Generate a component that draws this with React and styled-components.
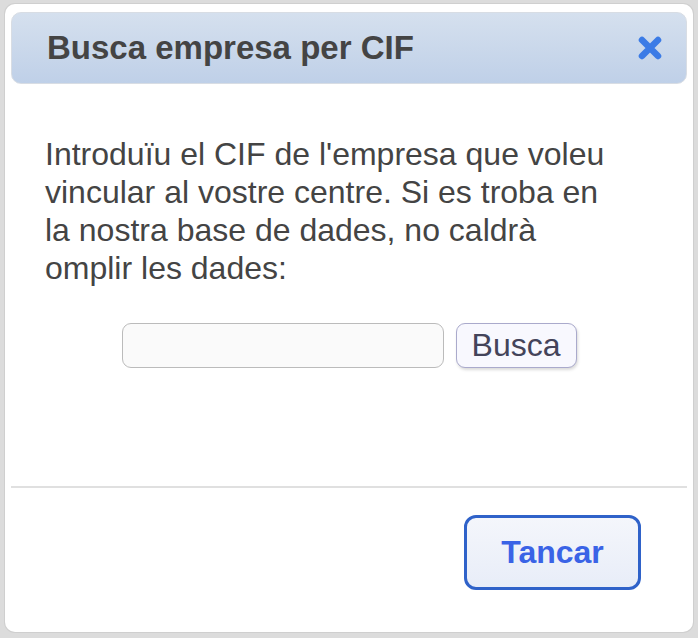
import React, { useState } from "react";
import styled, { createGlobalStyle } from "styled-components";

const GlobalStyle = createGlobalStyle`
  html, body {
    margin: 0;
    padding: 0;
    background: #d8d8d8;
  }
  body {
    font-family: "Liberation Sans", Arial, sans-serif;
  }
`;

const Backdrop = styled.div`
  width: 698px;
  height: 638px;
  padding: 4px 0 0 5px;
  box-sizing: border-box;
  background: #dcdcdc;
`;

const Dialog = styled.div`
  width: 688px;
  height: 628px;
  box-sizing: border-box;
  padding: 8px 6px 7px;
  background: #fff;
  border-radius: 10px;
  box-shadow: 0 0 0 1px #cfcfcf;
  display: flex;
  flex-direction: column;
`;

const TitleBar = styled.div`
  height: 72px;
  flex-shrink: 0;
  box-sizing: border-box;
  border: 1px solid #d8dde4;
  border-radius: 10px;
  background: linear-gradient(to bottom, #d5e0ee, #bfd0e8);
  display: flex;
  align-items: center;
  justify-content: space-between;
  padding: 0 21px 0 35px;
`;

const Title = styled.h1`
  margin: 0;
  font-size: 33px;
  font-weight: bold;
  color: #444;
`;

const CloseButton = styled.button`
  width: 30px;
  height: 30px;
  padding: 0;
  border: none;
  background: none;
  cursor: pointer;
  display: flex;
  align-items: center;
  justify-content: center;
`;

const Content = styled.div`
  padding: 51px 34px 0 34px;
  flex: 1;
`;

const Intro = styled.p`
  margin: 0;
  max-width: 585px;
  font-size: 32px;
  line-height: 38px;
  color: #444;
`;

const SearchRow = styled.form`
  margin-top: 36px;
  display: flex;
  justify-content: center;
  gap: 12px;
`;

const CifInput = styled.input`
  width: 322px;
  height: 45px;
  box-sizing: border-box;
  border: 1px solid #bbb;
  border-radius: 9px;
  background: #fafafa;
  font-family: "Liberation Sans", Arial, sans-serif;
  font-size: 28px;
  padding: 0 10px;
  outline: none;
`;

const SearchButton = styled.button`
  width: 121px;
  height: 45px;
  box-sizing: border-box;
  border: 1px solid #aaaacc;
  border-radius: 9px;
  background: #f8f8fe;
  box-shadow: 1px 2px 3px rgba(0, 0, 0, 0.15);
  font-family: "Liberation Sans", Arial, sans-serif;
  font-size: 32px;
  color: #44445a;
  padding: 0;
  cursor: pointer;
`;

const Divider = styled.hr`
  margin: 0;
  border: none;
  height: 2px;
  background: #e0e0e0;
`;

const Footer = styled.div`
  display: flex;
  justify-content: flex-end;
  padding: 27px 46px 35px 0;
`;

const CloseAction = styled.button`
  width: 177px;
  height: 75px;
  box-sizing: border-box;
  border: 3px solid #2f62c9;
  border-radius: 12px;
  background: linear-gradient(to bottom, #f4f6fb, #e8edf8);
  font-family: "Liberation Sans", Arial, sans-serif;
  font-size: 32px;
  font-weight: bold;
  color: #3a63e6;
  cursor: pointer;
`;

export default function App() {
  const [cif, setCif] = useState("");

  return (
    <>
      <GlobalStyle />
      <Backdrop>
        <Dialog>
          <TitleBar>
            <Title>Busca empresa per CIF</Title>
            <CloseButton aria-label="Tancar">
              <svg width="28" height="28" viewBox="0 0 28 28">
                <path
                  d="M6 6 L22 22 M22 6 L6 22"
                  stroke="#3b7be6"
                  strokeWidth="6.5"
                  strokeLinecap="round"
                  fill="none"
                />
              </svg>
            </CloseButton>
          </TitleBar>
          <Content>
            <Intro>
              Introduïu el CIF de l'empresa que voleu vincular al vostre centre.
              Si es troba en la nostra base de dades, no caldrà omplir les dades:
            </Intro>
            <SearchRow onSubmit={(e) => e.preventDefault()}>
              <CifInput
                type="text"
                value={cif}
                onChange={(e) => setCif(e.target.value)}
              />
              <SearchButton>Busca</SearchButton>
            </SearchRow>
          </Content>
          <Divider />
          <Footer>
            <CloseAction>Tancar</CloseAction>
          </Footer>
        </Dialog>
      </Backdrop>
    </>
  );
}
